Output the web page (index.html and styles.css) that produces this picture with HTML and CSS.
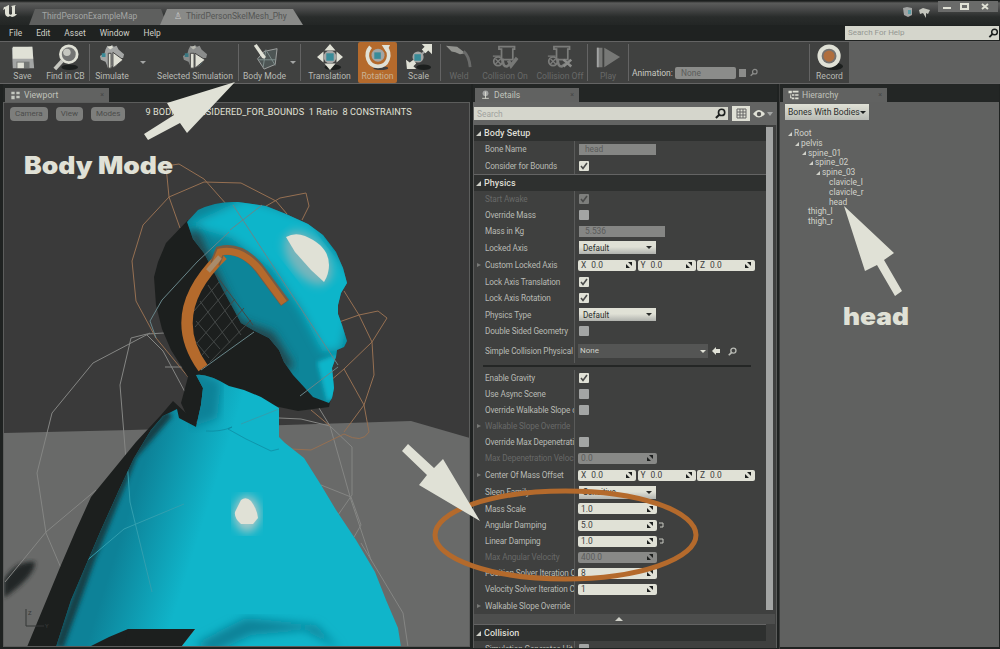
FILE: index.html
```html
<!DOCTYPE html>
<html lang="en">
<head>
<meta charset="utf-8">
<title>ThirdPersonSkelMesh_Phy</title>
<link rel="stylesheet" href="styles.css">
<script src="rows.js" defer></script>
</head>
<body>
<svg width="0" height="0" class="defs">
  <symbol id="mag" viewBox="0 0 12 12"><circle cx="7.2" cy="4.8" r="3.4" fill="none" stroke="currentColor" stroke-width="1.8"/><path d="M4.6 7.4 1 11" stroke="currentColor" stroke-width="2.2"/></symbol>
  <symbol id="truck" viewBox="0 0 30 28"><path d="M8 2h18v3h-2v12H11V5H8z" fill="none" stroke="currentColor" stroke-width="2"/><circle cx="7" cy="19" r="5" fill="none" stroke="currentColor" stroke-width="2"/><path d="m4 16 6 6m0-6-6 6M1 13h9" stroke="currentColor" stroke-width="1.5"/><path d="M12 16c1 6 1 9 5 9l4-3" fill="none" stroke="currentColor" stroke-width="3"/></symbol>
  <symbol id="man" viewBox="0 0 28 26"><path d="m7 5 2-4 3 1 2-2 2 2 3-1 2 4 6 5-1 4h-4v5l-4 4H9l-2-5-5-2-1-4 5-3z" fill="#a3a5a4"/><path d="m9 2 3 3 3-2-1-2zM10 21l4 1-1 3-4-1z" fill="#e0e1d6"/><path d="M3 9h4v4H3zM19 17l3 2-3 3z" fill="#398b98"/></symbol>
</svg>

<header class="titlebar">
  <svg class="logo" viewBox="0 0 16 16"><path d="M2 4c2 0 4-2 5-2v8c0 2 2 2 3 1V4L9 3l5-1-1 1v8l2 0c-1 2-4 3-5 3l-2-1-2 1C4 13 3 12 3 10V6L1 7z" fill="#e0e1d6"/></svg>
  <div class="doctab"><span>ThirdPersonExampleMap</span></div>
  <div class="doctab active"><i>♙</i><span>ThirdPersonSkelMesh_Phy</span></div>
  <div class="spacer"></div>
  <svg class="notices" viewBox="0 0 28 14"><path d="m1 2 4-1 5 1v7l-4 2-4-2z" fill="#a3a5a4"/><path d="M6 4h3v4H6z" fill="#5a9da6"/><path d="m17 4 4-2 7 2-2 4-2-1v5l-3-5-3 1z" fill="#c5c6be"/></svg>
  <svg class="winctl" viewBox="0 0 60 12"><path d="M0 1h60v11H0z" fill="#6a6b6a"/><path d="M5 7h8v2H5z" fill="#e0e1d6"/><path d="M23 4h7v5h-7z" fill="none" stroke="#e0e1d6" stroke-width="2"/><path d="m44 4 6 5m0-5-6 5" stroke="#e0e1d6" stroke-width="2"/></svg>
</header>
<nav class="menu"><span>File</span><span>Edit</span><span>Asset</span><span>Window</span><span>Help</span>
  <div class="help">Search For Help<svg><use href="#mag"/></svg></div>
</nav>

<div class="toolbar">
  <div class="tool w39"><svg viewBox="0 0 28 28"><path d="m2 4 22-1 2 23H3z" fill="#a3a5a4"/><path d="M3 3h21l1 13H3z" fill="#e0e1d6"/><path d="M7 19h14v7H7z" fill="#747775"/><path d="M8 20h7v6H8z" fill="#e0e1d6"/></svg><b>Save</b></div>
  <div class="tool w47"><svg viewBox="0 0 28 28"><ellipse cx="18" cy="25" rx="9" ry="3" fill="#1c1f1e"/><circle cx="17" cy="11" r="9" fill="#737473" stroke="#e0e1d6" stroke-width="3"/><circle cx="15" cy="9" r="4" fill="#c6c7c0"/><path d="m10 18-8 9" stroke="#c6c7c0" stroke-width="4"/></svg><b>Find in CB</b></div>
  <div class="sep"></div>
  <div class="tool w44"><svg viewBox="0 0 28 28"><use href="#man"/><path d="M10 10h3v16h-3zM15 9l11 8-11 9z" fill="#e0e1d6" stroke="#3e3e3e"/></svg><b>Simulate</b></div>
  <div class="arrow w18"></div>
  <div class="tool w86"><svg viewBox="0 0 28 28"><use href="#man" opacity=".75"/><path d="M9 10h4v16H9zM14 10l11 7-11 9z" fill="#e0e1d6" stroke="#3e3e3e"/></svg><b>Selected Simulation</b></div>
  <div class="sep"></div>
  <div class="tool w51"><svg viewBox="0 0 28 28"><path d="m6 16 7-8 14-3-2 17-12 5z" fill="#4d5554" stroke="#a3a5a4"/><path d="M7 17h19M12 25l3-19M16 8l9 15" stroke="#81918f"/><path d="m2 2 3-2 10 14-2 2-2-1z" fill="#e0e1d6"/></svg><b>Body Mode</b></div>
  <div class="arrow w10"></div>
  <div class="sep"></div>
  <div class="tool w57"><svg viewBox="0 0 28 28"><ellipse cx="17" cy="25" rx="9" ry="3" fill="#1c1f1e"/><path d="m14 0 6 7H8zM14 28l6-7H8zM0 14l7-6v12zM28 14l-7-6v12z" fill="#e0e1d6"/><circle cx="14" cy="14" r="7" fill="#a3a5a4"/><path d="M10 10h8v8h-8z" fill="#398b98"/></svg><b>Translation</b></div>
  <div class="tool w39 on"><svg viewBox="0 0 28 28"><ellipse cx="17" cy="26" rx="8" ry="2" fill="#3e3e3e"/><circle cx="14" cy="12" r="7" fill="#a3a5a4"/><path d="M10 9h7v7h-7z" fill="#398b98"/><path d="M6 3C-1 11 3 24 14 24S29 11 22 3" fill="none" stroke="#e0e1d6" stroke-width="4"/><path d="M18 1h9l-4 8z" fill="#e0e1d6"/></svg><b>Rotation</b></div>
  <div class="tool w43"><svg viewBox="0 0 28 28"><ellipse cx="19" cy="25" rx="8" ry="3" fill="#1c1f1e"/><path d="M8 20 21 7" stroke="#a3a5a4" stroke-width="2"/><path d="M17 0h11v11l-4-4-3 3-4-4 3-3zM0 17l4 3 4-3 3 4-3 3 3 3H1z" fill="#e0e1d6"/><circle cx="13" cy="14" r="6" fill="#a3a5a4"/><path d="M9 11h7v7H9z" fill="#398b98"/></svg><b>Scale</b></div>
  <div class="sep"></div>
  <div class="tool w36 off"><svg viewBox="0 0 28 28"><path d="m0 2 12 1 9 7-6 1-5-2-4-1z" fill="#92938f"/><path d="M19 8q6 5 7 17" fill="none" stroke="#6a6b6a" stroke-width="3"/></svg><b>Weld</b></div>
  <div class="tool w56 off"><svg viewBox="0 0 30 28"><use href="#truck"/><path d="m19 18 3 6 7-9" fill="none" stroke="#777876" stroke-width="4"/></svg><b>Collision On</b></div>
  <div class="tool w54 off"><svg viewBox="0 0 30 28"><use href="#truck"/><path d="m19 17 9 8m0-8-9 8" stroke="#8a8b89" stroke-width="3"/></svg><b>Collision Off</b></div>
  <div class="sep"></div>
  <div class="tool w40 off"><svg viewBox="0 0 28 28"><path d="M2 4h6v21H2zm8 0 17 10-17 11z" fill="#777876"/><path d="M3 4v21" stroke="#a3a5a4" stroke-width="2"/></svg><b>Play</b></div>
  <div class="sep"></div>
  <div class="anim"><b>Animation:</b><span>None</span><i></i><svg><use href="#mag"/></svg></div>
  <div class="sep"></div>
  <div class="tool w39"><svg viewBox="0 0 28 28"><ellipse cx="18" cy="24" rx="10" ry="4" fill="#1c1f1e"/><circle cx="13" cy="13" r="12.5" fill="#e0e1d6"/><circle cx="13" cy="13" r="8" fill="#747270"/><circle cx="13" cy="13" r="6" fill="#b06e3d"/></svg><b>Record</b></div>
  <div class="rest"></div>
</div>

<main>
  <section class="viewport">
    <div class="panetabs"><div class="panetab w104"><svg viewBox="0 0 12 12"><path d="M1 2h4v3H1zm6 0h4v3H7zM1 7h4v4H1zm6 0h4v3H7z" fill="#c4c8c0"/></svg><span>Viewport</span><u>×</u></div></div>
    <div class="scene">
      <svg class="world" viewBox="3 103 466 544">
        <defs>
          <filter id="b2"><feGaussianBlur stdDeviation="2"/></filter>
          <filter id="b5"><feGaussianBlur stdDeviation="5"/></filter>
          <linearGradient id="cape" gradientUnits="userSpaceOnUse" x1="105" y1="500" x2="200" y2="530"><stop offset="0" stop-color="#0d8298"/><stop offset=".25" stop-color="#0d8298"/><stop offset="1" stop-color="#10b5ca"/></linearGradient>
          <clipPath id="face"><path d="M186 222 197 210Q215 201 237 202L265 206 285 214 307 224 322 235 335 252 342 268 346 283 340 293 337 305 337 314 341 325 346 341 343 347 336 350 335 357 331 368 333 388 331 398 328 403 312 397 303 387 292 375 283 362 278 350 268 338 252 330 240 323 233 310 222 290 213 272 203 253 192 239Z"/></clipPath>
          <clipPath id="body"><path d="M195 375Q206 373 228 386L243 390 260 397 278 408V437L284 443 303 458 320 485 335 510 355 540 374 572 385 600 397 628 400 647H180L194 629H127L108 637 88 647H55L70 600 85 565 100 530 118 490 133 458 150 430 162 416 176 409 178 418 195 427 200 405 202 388Z"/></clipPath>
        </defs>
        <path d="M3 103h466v544H3z" fill="#3a3a3a"/>
        <path d="M3 433 130 430 410 421 469 438v209H3z" fill="#696a69"/>
        <path d="M3 580Q15 560 34 562 35 575 3 598z" fill="#242625" filter="url(#b2)"/>
        <g fill="none" stroke="#858684">
          <path d="M149 333 92 363 51 413 36 473 45 533 60 568M130 338 119 385 125 460M130 338l16-4 17-1M146 335 162 351 184 392M95 490 45 532 4 582M164 367h22"/>
          <path d="M318 408 329 426 350 500 370 560M278 418 300 419 329 426 351 447V495L337 515M350 497 320 485M350 497l10 28-7 12M360 543l42 70 5 34M128 629l-14 18"/>
        </g>
        <g fill="none" stroke="#967052">
          <path d="M240 183 203 182 168 197 142 225 131 261 135 301 155 338 188 378M168 197 179 228M168 197 165 166 178 164 203 179 226 205M240 183 275 201 286 214M260 209 279 198 305 193 308 206 301 220M343 291 358 315 371 342 373 375 363 405 343 432M338 322 358 315 377 311 386 318 371 342 343 369 300 406M343 369 363 405 368 432Q361 444 343 434L310 450 290 449M310 410 329 426"/>
        </g>
        <path d="M187 220 165 243 157 262 153 277 155 305 161 329 170 350 187 377 180 403 190 425 230 400 278 407 297 411 328 407 330 398 290 340 220 260z" fill="#1c1f1e"/>
        <g clip-path="url(#face)"><path d="M150 190h210v220H150z" fill="#0d8599"/>
          <path d="M187 225 245 198 310 220 355 282 340 350 322 352 300 310 270 268 230 238z" fill="#10b5ca" filter="url(#b5)"/>
          <path d="m316 362 20-8v42l-10 6z" fill="#10b5ca" filter="url(#b2)"/>
          <path d="M191 232 235 325 268 337 288 369" fill="none" stroke="#263e42" stroke-width="11" filter="url(#b5)"/>
          <ellipse cx="307" cy="258" rx="18" ry="31" transform="rotate(-38 307 258)" fill="#78b5bb" filter="url(#b5)"/>
        </g>
        <path d="M285 237Q294 232 304 236 328 246 328 265 328 274 323 282L310 270 294 252z" fill="#e0e1d6"/>
        <path d="m232 205 105 160M229 230l32-25M228 232 196 262 161 300 149 321 155 338M200 370l53-38M337 367l-38 29" fill="none" stroke="#68868a"/>
        <path d="M215 275 252 325M207 285 240 335M199 301 229 343M195 321l24 28M194 341l14 17M218 282l-25 29M226 290l-32 37M234 299l-38 44M243 308l-43 48M250 320l-41 42" stroke="#444847" fill="none"/>
        <path d="M172 401 160 415 135 442 90 497 75 530 60 565 26 647h154l20-220z" fill="#1c1f1e"/>
        <g clip-path="url(#body)"><path d="M20 370h390v280H20z" fill="url(#cape)"/>
          <path d="M190 370 220 382 216 418 190 427z" fill="#0d8298" filter="url(#b5)"/>
          <path d="M58 647 90 558 132 455 168 413" fill="none" stroke="#193f47" stroke-width="9" filter="url(#b2)"/>
          <path d="M195 644Q230 625 245 618L315 625 340 650 304 630 250 635 210 654z" fill="#0d8298" filter="url(#b5)"/>
          <path d="M205 431q15 1 26-4l-4 2 18 10 25 12 8-2" fill="none" stroke="#0d8298" opacity=".6"/>
          <path d="m126 460 3 42 22 90M83 563l40-34 60-25M240 424l38-15" fill="none" stroke="#329faf"/>
        </g>
        <ellipse cx="246" cy="514" rx="13" ry="18" fill="#a7c8c7" filter="url(#b5)"/>
        <path d="M240 500q5-4 10 1 6 8 7 17l-5 6h-12q-7-6-6-12z" fill="#e0e1d6"/>
        <path d="M127 629h67l-14 18h-57z" fill="#1c1f1e"/>
        <path d="M222 255Q162 312 202 368" fill="none" stroke="#b46a2c" stroke-width="11"/>
        <path d="M214 264 219 251Q240 246 258 268L284 303" fill="none" stroke="#785b43" stroke-width="10"/>
        <path d="M214 264 219 252Q240 248 258 269L283 303" fill="none" stroke="#b46a2c" stroke-width="7"/>
        <path d="M207 271l12-14" stroke="#a98b6b" stroke-width="5"/>
        <path d="M25 609v17h18" fill="none" stroke="#353636"/><text x="44" y="628" class="axis">Y</text><text x="27" y="615" class="axis">Z</text>
      </svg>
      <div class="pills"><span>Camera</span><span>View</span><span>Modes</span><p>9 BODIES CONSIDERED_FOR_BOUNDS&nbsp; 1 Ratio&nbsp; 8 CONSTRAINTS</p></div>
    </div>
  </section>

  <section class="details">
    <div class="panetabs"><div class="panetab w104"><svg viewBox="0 0 12 12"><circle cx="6" cy="4" r="3.5" fill="#a3a5a4"/><path d="M6 2v8M2 10h8" stroke="#e0e1d6"/></svg><span>Details</span><u>×</u></div></div>
    <div class="dsearch"><div>Search<svg><use href="#mag"/></svg></div><svg class="grid" viewBox="0 0 18 15"><path d="M0 0h18v15H0z" fill="#e0e1d6"/><path d="M5 3h9v9H5zM5 6h9M5 9h9M8 3v9M11 3v9" stroke="#646464" fill="none"/></svg><svg class="eye" viewBox="0 0 20 10"><path d="M0 5q6-8 12 0-6 7-12 0z" fill="#e0e1d6"/><circle cx="6" cy="5" r="2.2" fill="#555"/><path d="M14 3h6l-3 4z" fill="#a3a5a4"/></svg></div>
    <div class="scroller"><div class="rows" id="rows"></div><div class="track"><div></div></div></div>
  </section>

  <section class="hierarchy">
    <div class="panetabs"><div class="panetab w104"><svg viewBox="0 0 12 12"><path d="M0 1h4v3H0zM5 1h7v2H5zM4 5h3v2H4zM8 5h4v2H8zM4 9h3v2H4zM8 9h4v2H8zM2 4v6h2" fill="#e0e1d6"/></svg><span>Hierarchy</span><u>×</u></div></div>
    <div class="hbody">
      <div class="bones">Bones With Bodies<i></i></div>
      <div class="tree">
        <p class="l0"><i></i>Root</p><p class="l1"><i></i>pelvis</p><p class="l2"><i></i>spine_01</p><p class="l3"><i></i>spine_02</p><p class="l4"><i></i>spine_03</p>
        <p class="l5"><i class="no"></i>clavicle_l</p><p class="l5"><i class="no"></i>clavicle_r</p><p class="l5"><i class="no"></i>head</p><p class="l2"><i class="no"></i>thigh_l</p><p class="l2"><i class="no"></i>thigh_r</p>
      </div>
    </div>
  </section>
</main>

<svg class="notes" viewBox="0 0 1000 649">
  <ellipse cx="565.5" cy="535" rx="130.5" ry="44" fill="none" stroke="#b46a2c" stroke-width="5"/>
  <g fill="#e0e1d6">
    <path d="M235 82 187 133 180 123 148 140 144 134 174 115 167 103z"/>
    <path d="M480 521 419 485 427 475 402 451 408 444 434 468 443 459z"/>
    <path d="M844 206 894 253 884 260 902 291 895 296 877 265 865 271z"/>
    <text x="24" y="173.5" textLength="149" lengthAdjust="spacingAndGlyphs">Body Mode</text>
    <text x="843" y="325" textLength="66" lengthAdjust="spacingAndGlyphs">head</text>
  </g>
</svg>
</body>
</html>
```

FILE: styles.css
```css
* { box-sizing: border-box; }
body { margin: 0; width: 1000px; height: 649px; overflow: hidden; display: flex; flex-direction: column; position: relative; background: #1f2221; color: #b6b8b3; font: 8.4px/10px Roboto, "Liberation Sans", sans-serif; white-space: nowrap; }
p { margin: 0; }
b { font-weight: 400; }
i, u { font-style: normal; text-decoration: none; }
.defs { position: absolute; }
.spacer { flex: 1; }

.titlebar { height: 25px; flex: none; display: flex; align-items: flex-end; background: linear-gradient(#1c1f1e 1px, #5b5c5b 3px, #484949 9px, #292c2b 17px, #232625); }
.logo { width: 16px; height: 16px; margin: 0 11px 6px 2px; }
.doctab { width: 138px; height: 16px; padding: 2px 0 0 13px; background: #5e5f5e; clip-path: polygon(6px 0, 132px 0, 138px 100%, 0 100%); color: #a3a5a4; font-size: 8.5px; }
.doctab.active { margin-left: -7px; width: 143px; padding-left: 14px; background: #898a88; color: #545554; clip-path: polygon(7px 0, 133px 0, 143px 100%, 0 100%); }
.doctab i { margin-right: 4px; color: #ccc; }
.notices { width: 28px; height: 14px; margin: 0 8px 5px 0; }
.winctl { width: 60px; height: 12px; align-self: flex-start; margin-right: 2px; }

.menu { height: 16px; flex: none; display: flex; align-items: center; padding-left: 9px; color: #d0d1c9; }
.menu span { margin-right: 14px; }
.help { margin-left: auto; width: 154px; height: 14px; padding: 2px 0 0 3px; background: #d5d6cc; color: #949692; display: flex; justify-content: space-between; margin-right: 1px; font-size: 8px; }
.help svg { width: 11px; height: 10px; color: #1c1f1e; }

.toolbar { height: 43px; flex: none; display: flex; padding-left: 3px; background: #404140; border-top: 1px solid #646464; border-bottom: 1px solid #646464; }
.tool { display: flex; flex-direction: column; align-items: center; padding-top: 2px; color: #b8bab4; font-size: 8.6px; }
.tool svg { width: 26px; height: 26px; overflow: visible; flex: none; }
.tool b { margin-top: .5px; }
.tool.on { background: #b46a2c; border-radius: 2px; color: #c9b294; }
.tool.off { color: #686968; }
.tool.off svg { color: #7b7c7a; }
.sep { width: 1px; background: #646464; margin: 2px 0; }
.arrow::after { content: ""; display: block; border: 3px solid transparent; border-top-color: #a3a5a4; width: 0; margin: 19px auto 0; }
.arrow.w10::after { margin-left: 0; }
.w10 { width: 10px; } .w18 { width: 18px; } .w36 { width: 36px; } .w39 { width: 39px; } .w40 { width: 40px; }
.w43 { width: 43px; } .w44 { width: 44px; } .w47 { width: 47px; } .w51 { width: 51px; } .w54 { width: 54px; }
.w56 { width: 56px; } .w57 { width: 57px; } .w86 { width: 86px; } .w104 { width: 104px; }
.anim { width: 180px; display: flex; align-items: flex-start; padding: 25px 0 0 3px; color: #c8c9c2; }
.anim b { width: 43px; margin-top: 1px; font-size: 8.5px; }
.anim span { width: 61px; height: 12px; border-radius: 2px; background: #8b8c8a; color: #5b5c5b; padding: 1px 6px; }
.anim i { width: 7px; height: 8px; margin: 2px 4px 0 3px; background: #8b8c8a; }
.anim svg { width: 8px; height: 9px; margin-top: 1px; color: #8b8c8a; }
.rest { flex: 1; background: #5f605f; }

main { flex: 1; min-height: 0; display: flex; }
.panetabs { height: 18px; flex: none; display: flex; align-items: flex-end; padding-top: 4px; background: #232625; }
.panetab { height: 14px; display: flex; align-items: center; background: #616261; padding: 0 5px; font-size: 8.6px; color: #c0c2bb; }
.panetab svg { width: 11px; height: 10px; margin-right: 3px; }
.panetab u { margin-left: auto; font-size: 7px; color: #454645; }
.viewport { width: 471px; display: flex; flex-direction: column; padding-left: 3px; }
.viewport .panetabs { padding-left: 2px; }
.scene { height: 545px; width: 467px; position: relative; border: 1px solid #5c5d5c; overflow: hidden; }
.world { width: 466px; height: 544px; display: block; }
.axis { font-size: 6px; fill: #3b3c3b; }
.pills { position: absolute; left: 6px; top: 4px; display: flex; align-items: flex-start; }
.pills span { height: 14px; padding: 2px 5px; border-radius: 4px; background: #7d7e7c; color: #4b4c4b; margin-right: 8px; font-size: 8px; }
.pills p { color: #e0e1d6; font-size: 9.15px; letter-spacing: .08px; margin-left: 12px; }

.details { width: 304px; margin-left: 2px; display: flex; flex-direction: column; }
.details .panetabs { padding-left: 2px; }
.dsearch { height: 23px; flex: none; background: #636463; display: flex; align-items: center; gap: 4px; padding-left: 1px; }
.dsearch div { width: 254px; height: 13px; padding: 2px 2px 0 3px; display: flex; justify-content: space-between; background: #d5d6cc; color: #a0a29e; }
.dsearch div svg { width: 11px; height: 11px; color: #1c1f1e; margin-top: -1px; }
.grid { width: 18px; height: 15px; }
.eye { width: 20px; height: 10px; margin-left: -1px; }
.scroller { height: 523px; display: flex; border: solid #5c5d5c; border-width: 0 1px; background: #3f403f; overflow: hidden; }
.rows { width: 292px; }
.track { width: 8px; padding-top: 2px; }
.track div { width: 7px; height: 483px; background: #a3a5a4; }
.head { display: flex; align-items: center; height: 16px; background: #2e302f; color: #deded5; font-size: 9px; font-weight: 500; padding-left: 2px; letter-spacing: .05px; }
.head.line { height: 17px; border-top: 1px solid #646464; }
.tri { width: 0; height: 0; border-left: 5px solid transparent; border-bottom: 5px solid #d0d1c9; margin-right: 3px; }
.row { display: flex; align-items: stretch; color: #b8bab4; }
.row .lab { width: 101px; flex: none; border-right: 1px solid #5a5b5a; padding-left: 11px; display: flex; align-items: center; overflow: hidden; position: relative; font-size: 8.2px; letter-spacing: -.12px; }
.row .ex { position: absolute; left: 3px; border: 2.5px solid transparent; border-left: 4px solid #777876; border-right: 0; }
.row.dis .lab { color: #686968; }
.row .val { display: flex; align-items: center; padding-left: 3px; }
.cut { height: 7px; padding: 2px 15px 0 9px; }
.cut div { border-top: 2px solid #242625; }
.box { width: 10px; height: 10px; background: #a3a5a4; border-radius: 1px; display: block; margin-left: 1px; }
.box.on { background: #e0e1d6; }
.dis .box { background: #7d7e7c; }
.box svg { display: block; width: 10px; height: 10px; }
.num { height: 11px; background: #e0e1d6; color: #3e3e3e; border-radius: 2px; display: flex; align-items: center; padding: 0 4px 0 3px; width: 79px; }
.num svg { width: 6px; height: 6px; margin-left: auto; }
.num em { font-style: normal; margin-right: 5px; }
.val .n3 { width: 58px; margin-right: 1.5px; }
.gray { background: #888987; color: #5b5c5b; }
.text { width: 77px; height: 11px; padding: 0 6px; margin-left: 1px; background: #858684; color: #5b5c5b; display: flex; align-items: center; }
.text.wide { width: 86px; }
.drop { width: 77px; height: 13px; margin-left: 1px; background: linear-gradient(#e0e1d6 45%, #b0b2ae); color: #2a2c2b; display: flex; align-items: center; justify-content: space-between; padding: 0 4px; font-size: 8.2px; }
.drop::after, .none::after { content: ""; border: 3px solid transparent; border-top-color: #2a2c2b; border-bottom: 0; }
.none { width: 130px; height: 14px; background: #545554; color: #d0d1c9; display: flex; align-items: center; justify-content: space-between; padding: 0 2px; font-size: 8px; }
.none::after { border-top-color: #e0e1d6; }
.back { width: 8px; height: 8px; margin: 0 8px 0 4px; }
.find { width: 9px; height: 9px; }
.reset { width: 5px; height: 6px; margin-left: 2px; }
.more { height: 10px; width: 301px; background: #4d4e4d; display: flex; justify-content: center; align-items: center; padding-right: 12px; }
.more i { border: 4px solid transparent; border-top: 0; border-bottom: 4px solid #d0d1c9; }

.hierarchy { flex: 1; margin-left: 2px; display: flex; flex-direction: column; border-left: 1px solid #3a3b3a; padding-right: 1px; }
.hierarchy .panetabs { padding-left: 3px; }
.hbody { height: 545px; background: #606160; padding: 2px 0 0 5px; }
.bones { width: 84px; height: 16px; background: linear-gradient(#e0e1d6, #b9bbb5); color: #2a2c2b; display: flex; align-items: center; justify-content: space-between; padding: 0 3px; font-size: 8.6px; }
.bones i { border: 3px solid transparent; border-top-color: #1c1f1e; border-bottom: 0; }
.tree { padding: 9px 0 0 3px; line-height: 9.8px; color: #d2d3cb; }
.tree p { display: flex; align-items: center; height: 9.8px; }
.tree i { border-left: 4px solid transparent; border-bottom: 4px solid #d0d1c9; margin-right: 2px; }
.tree .no { visibility: hidden; }
.l1 { margin-left: 7px; } .l2 { margin-left: 14px; } .l3 { margin-left: 21px; } .l4 { margin-left: 28px; } .l5 { margin-left: 35px; }

.notes { position: absolute; left: 0; top: 0; width: 1000px; height: 649px; pointer-events: none; }
.notes text { font: 900 24px Inter, "DejaVu Sans", sans-serif; }
```

FILE: rows.js
```js
const spin = '<svg viewBox="0 0 6 6"><path d="M2 0h4v4zM0 2v4h4z" fill="#1c1f1e"/></svg>';
const off = '<span class="box"></span>';
const on = '<span class="box on"><svg viewBox="0 0 10 10"><path d="m2 5 2 2.5L8 2" fill="none" stroke="#4a4b4a" stroke-width="1.6"/></svg></span>';
const num = v => `<div class="num">${v}${spin}</div>`;
const gray = v => `<div class="num gray">${v}${spin}</div>`;
const xyz = ['X', 'Y', 'Z'].map(a => `<div class="num n3"><em>${a}</em>0.0${spin}</div>`).join('');
const drop = v => `<div class="drop">${v}</div>`;
const reset = '<svg class="reset" viewBox="0 0 5 6"><path d="M0 1h4v4H1" fill="none" stroke="#c8c9c2"/></svg>';
const head = (t, c = '') => `<div class="head ${c}"><span class="tri"></span>${t}</div>`;
const row = (h, label, val, opt = '') =>
  `<div class="row ${opt}" style="height:${h}px"><div class="lab">${opt.includes('exp') ? '<span class="ex"></span>' : ''}${label}</div><div class="val">${val}</div></div>`;

document.getElementById('rows').innerHTML = [
  head('Body Setup'),
  row(16, 'Bone Name', '<div class="text">head</div>'),
  row(17, 'Consider for Bounds', on),
  head('Physics', 'line'),
  row(16, 'Start Awake', on, 'dis'),
  row(16, 'Override Mass', off),
  row(16, 'Mass in Kg', '<div class="text wide">5.536</div>'),
  row(17, 'Locked Axis', drop('Default')),
  row(18, 'Custom Locked Axis', xyz, 'exp'),
  row(16, 'Lock Axis Translation', on),
  row(16, 'Lock Axis Rotation', on),
  row(17, 'Physics Type', drop('Default')),
  row(16, 'Double Sided Geometry', off),
  row(24, 'Simple Collision Physical', '<div class="none">None</div><svg class="back" viewBox="0 0 8 8"><path d="M0 4l4-4v2h4v4H4v2z" fill="#e0e1d6"/></svg><svg class="find"><use href="#mag"/></svg>'),
  '<div class="cut"><div></div></div>',
  row(16, 'Enable Gravity', on),
  row(16, 'Use Async Scene', off),
  row(16, 'Override Walkable Slope o', off),
  row(16, 'Walkable Slope Override', '', 'dis exp'),
  row(16, 'Override Max Depenetrati', off),
  row(16, 'Max Depenetration Veloci', gray('0.0'), 'dis'),
  row(18, 'Center Of Mass Offset', xyz, 'exp'),
  row(16, 'Sleep Family', drop('Sensitive')),
  row(17, 'Mass Scale', num('1.0')),
  row(16, 'Angular Damping', num('5.0') + reset),
  row(16, 'Linear Damping', num('1.0') + reset),
  row(16, 'Max Angular Velocity', gray('400.0'), 'dis'),
  row(16, 'Position Solver Iteration C', num('8')),
  row(16, 'Velocity Solver Iteration C', num('1')),
  row(17, 'Walkable Slope Override', '', 'exp'),
  '<div class="more"><i></i></div>',
  head('Collision', 'line'),
  row(16, 'Simulation Generates Hit', off)
].join('');
```
